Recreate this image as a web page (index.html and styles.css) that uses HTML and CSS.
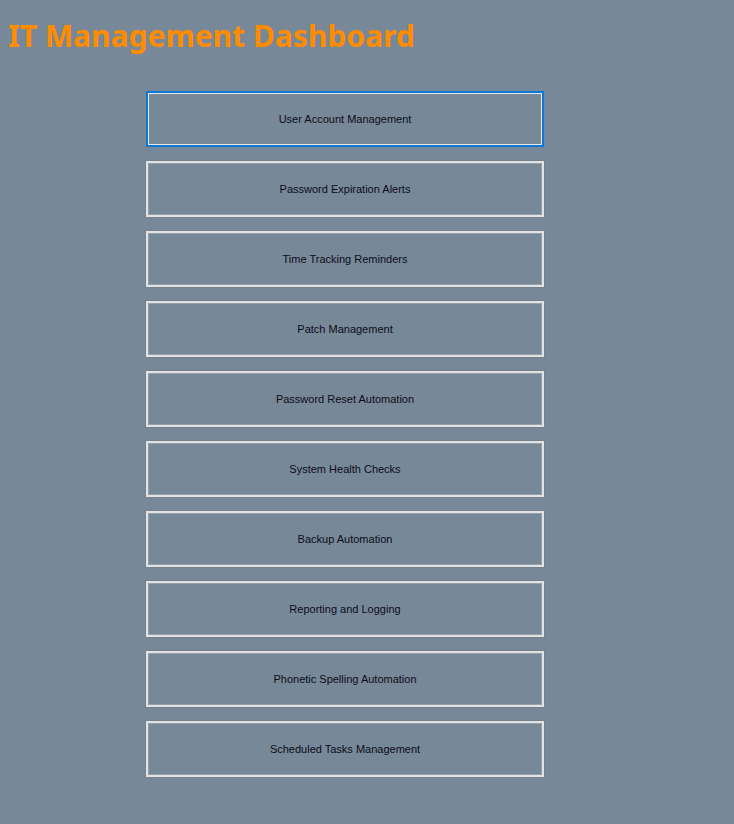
FILE: index.html
```html
<!DOCTYPE html>
<html>
<head>
<meta charset="utf-8">
<link rel="stylesheet" href="styles.css">
</head>
<body>
<h1 class="title">IT Management Dashboard</h1>
<div class="menu">
  <button class="btn focused">User Account Management</button>
  <button class="btn">Password Expiration Alerts</button>
  <button class="btn">Time Tracking Reminders</button>
  <button class="btn">Patch Management</button>
  <button class="btn">Password Reset Automation</button>
  <button class="btn">System Health Checks</button>
  <button class="btn">Backup Automation</button>
  <button class="btn">Reporting and Logging</button>
  <button class="btn">Phonetic Spelling Automation</button>
  <button class="btn">Scheduled Tasks Management</button>
</div>
</body>
</html>
```
FILE: styles.css
```css
html, body {
  margin: 0;
  padding: 0;
  background: #778899;
  height: 100%;
}
body {
  width: 734px;
  height: 824px;
  overflow: hidden;
}
.title {
  margin: 0;
  padding: 14px 0 0 8px;
  height: 77px;
  box-sizing: border-box;
  font-family: "Noto Sans", "Open Sans", sans-serif;
  font-weight: 700;
  font-size: 30px;
  line-height: 44px;
  color: #ff8c00;
  letter-spacing: 0;
}
.menu {
  display: flex;
  flex-direction: column;
  gap: 14px;
  padding-left: 146px;
  padding-top: 14px;
}
.btn {
  width: 398px;
  height: 56px;
  box-sizing: border-box;
  background: #778899;
  border: 2px solid #e2e2e2;
  box-shadow: 0 0 0 1px rgba(120,128,140,0.7), inset 0 0 0 1px rgba(200,205,212,0.35);
  font-family: "Liberation Sans", Arial, sans-serif;
  font-size: 11px;
  color: #0c0c18;
  padding: 0;
  margin: 0;
  text-align: center;
}
.btn.focused {
  border-color: #0a78d4;
  box-shadow: inset 0 0 0 1px #e8e8e8;
}
```
